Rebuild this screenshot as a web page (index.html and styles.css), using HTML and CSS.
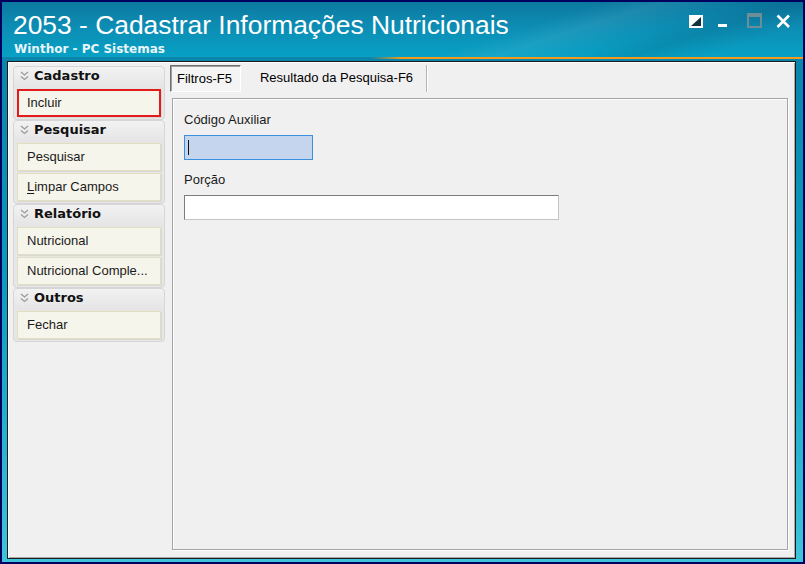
FILE: index.html
```html
<!DOCTYPE html>
<html lang="pt-BR">
<head>
    <meta charset="UTF-8">
    <title>2053 - Cadastrar Informações Nutricionais</title>
    <link rel="stylesheet" href="styles.css">
</head>
<body>
    <div class="window">
        <header class="titlebar">
            <div class="title-text">
                <h1>2053 - Cadastrar Informações Nutricionais</h1>
                <div class="subtitle">Winthor - PC Sistemas</div>
            </div>
            <div class="controls">
                <!-- restaurar -->
                <svg width="15" height="15" viewBox="0 0 15 15">
                    <rect x="0" y="2" width="14" height="13" fill="#fff"/>
                    <polygon points="12,4 12,13 2,13" fill="#10313d"/>
                </svg>
                <!-- minimizar -->
                <svg width="15" height="15" viewBox="0 0 15 15">
                    <rect x="0" y="11" width="9" height="3" fill="#fff"/>
                </svg>
                <!-- maximizar (desabilitado) -->
                <svg width="15" height="15" viewBox="0 0 15 15">
                    <rect x="1" y="1" width="13" height="13" fill="none" stroke="#6d8d99" stroke-width="2"/>
                    <rect x="1" y="1" width="13" height="3" fill="#6d8d99"/>
                </svg>
                <!-- fechar -->
                <svg width="15" height="15" viewBox="0 0 15 15">
                    <path d="M1.5 2.5 L13 14 M13 2.5 L1.5 14" stroke="#fff" stroke-width="2.6" fill="none"/>
                </svg>
            </div>
        </header>
        <div class="accent"></div>

        <div class="client">
            <aside class="sidebar">
                <section class="group">
                    <div class="group-header">
                        <svg class="chevron" width="9" height="10" viewBox="0 0 9 10"><path d="M1 1 L4.5 4 L8 1 M1 5.5 L4.5 8.5 L8 5.5" fill="none" stroke="#9a9a9a" stroke-width="1.2"/></svg>
                        Cadastro
                    </div>
                    <div class="item active">Incluir</div>
                </section>
                <section class="group">
                    <div class="group-header">
                        <svg class="chevron" width="9" height="10" viewBox="0 0 9 10"><path d="M1 1 L4.5 4 L8 1 M1 5.5 L4.5 8.5 L8 5.5" fill="none" stroke="#9a9a9a" stroke-width="1.2"/></svg>
                        Pesquisar
                    </div>
                    <div class="item">Pesquisar</div>
                    <div class="item"><u>L</u>impar Campos</div>
                </section>
                <section class="group">
                    <div class="group-header">
                        <svg class="chevron" width="9" height="10" viewBox="0 0 9 10"><path d="M1 1 L4.5 4 L8 1 M1 5.5 L4.5 8.5 L8 5.5" fill="none" stroke="#9a9a9a" stroke-width="1.2"/></svg>
                        Relatório
                    </div>
                    <div class="item">Nutricional</div>
                    <div class="item">Nutricional Comple...</div>
                </section>
                <section class="group">
                    <div class="group-header">
                        <svg class="chevron" width="9" height="10" viewBox="0 0 9 10"><path d="M1 1 L4.5 4 L8 1 M1 5.5 L4.5 8.5 L8 5.5" fill="none" stroke="#9a9a9a" stroke-width="1.2"/></svg>
                        Outros
                    </div>
                    <div class="item">Fechar</div>
                </section>
            </aside>

            <main class="content">
                <div class="tabs">
                    <div class="tab selected">Filtros-F5</div>
                    <div class="tab">Resultado da Pesquisa-F6</div>
                </div>
                <div class="tab-panel">
                    <div class="field">
                        <label>Código Auxiliar</label>
                        <div class="input focused"><span class="caret"></span></div>
                    </div>
                    <div class="field">
                        <label>Porção</label>
                        <div class="input wide"></div>
                    </div>
                </div>
            </main>
        </div>
    </div>
</body>
</html>
```

FILE: styles.css
```css
* {
    box-sizing: border-box;
}
body {
    margin: 0;
    font-family: "Liberation Sans", Arial, sans-serif;
    font-size: 13px;
    color: #000;
    background: #000066;
}
.window {
    width: 805px;
    height: 564px;
    border: 2px solid #00005e;
    background: linear-gradient(180deg, #0b7fa6 0%, #0a9cc2 50%, #3fc4da 100%);
    display: flex;
    flex-direction: column;
    overflow: hidden;
}

/* barra de titulo */
.titlebar {
    height: 55px;
    flex: none;
    display: flex;
    justify-content: space-between;
    align-items: flex-start;
    padding: 0 12px 0 11px;
    color: #fff;
    background:
        linear-gradient(162deg, transparent 62%, rgba(255,255,255,0.07) 68%, transparent 76%, rgba(0,40,70,0.12) 82%, transparent 90%),
        linear-gradient(180deg, #0c79a0 0%, #0d8db4 45%, #07a1c5 100%);
}
.titlebar h1 {
    margin: 8px 0 0 0;
    font-family: "Liberation Sans", Arial, sans-serif;
    font-weight: normal;
    font-size: 26.4px;
    line-height: 30px;
}
.subtitle {
    margin-top: 2px;
    margin-left: 1px;
    font-family: "DejaVu Sans", sans-serif;
    font-weight: bold;
    font-size: 12px;
    line-height: 14px;
    color: #e8f6fa;
}
.controls {
    display: flex;
    gap: 14px;
    margin-top: 11px;
}
.accent {
    height: 2px;
    flex: none;
    background: linear-gradient(90deg, transparent 46%, #f39a1a 50%, #f39a1a 100%);
}

/* area cliente */
.client {
    flex: none;
    height: 498px;
    width: 789px;
    margin: 2px 0 0 5px;
    background: #f0f0f0;
    border: 1px solid #1b1b1b;
    box-shadow: inset 1px 1px 0 #ffffff, inset -1px -1px 0 #a8a8a8;
    display: flex;
    padding: 3px 7px 8px 5px;
}

/* menu lateral */
.sidebar {
    width: 152px;
    flex: none;
    margin-top: 1px;
}
.group {
    border: 1px solid #d6d6d6;
    border-radius: 4px;
    background: #e7e7e7;
    padding: 0 3px 2px 3px;
}
.group-header {
    height: 22px;
    display: flex;
    align-items: center;
    gap: 5px;
    padding: 0 0 5px 3px;
    margin: 0 -3px;
    border-radius: 4px 4px 0 0;
    background: linear-gradient(180deg, #f2f2f2, #e4e4e4);
    font-family: "DejaVu Sans", sans-serif;
    font-weight: bold;
    font-size: 13px;
    color: #111;
}
.chevron {
    margin-left: 3px;
    margin-top: 1px;
}
.item {
    height: 28px;
    line-height: 26px;
    padding-left: 9px;
    padding-right: 4px;
    background: #f6f5eb;
    border: 1px solid #e2dec0;
    box-shadow: 1px 1px 0 #d8d8d8;
    white-space: nowrap;
    color: #1a1a1a;
}
.item + .item {
    margin-top: 2px;
}
.item.active {
    border: 2px solid #e31b1b;
    line-height: 24px;
    padding-left: 8px;
}
.item u {
    text-underline-offset: 2px;
}

/* abas */
.content {
    flex: 1;
    margin-left: 5px;
    display: flex;
    flex-direction: column;
}
.tabs {
    height: 27px;
    display: flex;
    flex: none;
}
.tab {
    line-height: 26px;
    padding: 0 13px;
    border-right: 1px solid #b4b4b4;
    box-shadow: 1px 0 0 #ffffff;
}
.tab.selected {
    padding: 0 8px 0 6px;
    border: 1px solid;
    border-color: #6f6f6f #ffffff #ffffff #6f6f6f;
    box-shadow: inset 1px 1px 0 #a0a0a0;
    background: #f4f4f4;
    margin-right: 6px;
}
.tab-panel {
    flex: 1;
    margin: 6px 0 0 2px;
    border: 1px solid #a4a4a4;
    box-shadow: inset 1px 1px 0 #ffffff, 1px 1px 0 #ffffff;
    padding: 13px 11px;
}

/* campos */
.field + .field {
    margin-top: 12px;
}
.field label {
    display: block;
    line-height: 16px;
    margin-bottom: 7px;
    color: #1a1a1a;
}
.input {
    height: 25px;
    width: 375px;
    background: #fff;
    border: 1px solid;
    border-color: #7c7c7c #c4c4c4 #c4c4c4 #7c7c7c;
}
.input.focused {
    width: 129px;
    background: #c6d5ee;
    border: 1px solid #3c8fdc;
    padding: 4px 0 0 3px;
}
.caret {
    display: block;
    width: 1px;
    height: 15px;
    background: #111;
}
```
